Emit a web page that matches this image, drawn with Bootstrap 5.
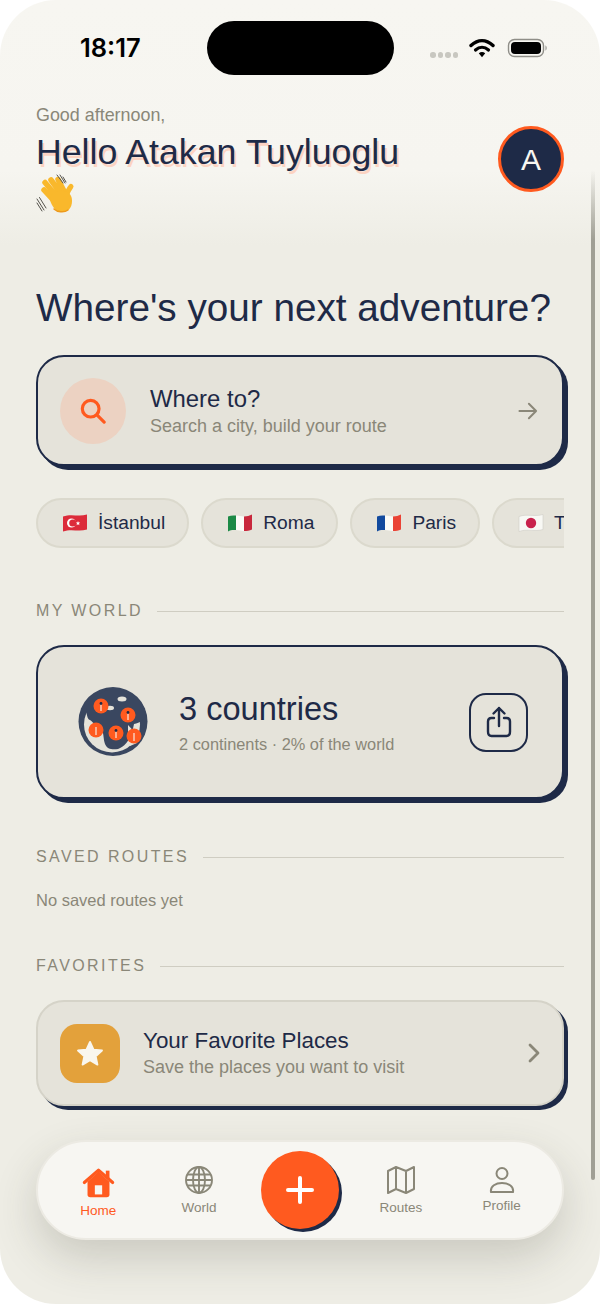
<!DOCTYPE html>
<html lang="en">
<head>
  <meta charset="UTF-8" />
  <meta name="viewport" content="width=device-width, initial-scale=1.0" />
  <title>Home</title>
  <link href="https://cdn.jsdelivr.net/npm/bootstrap@5.3.0/dist/css/bootstrap.min.css" rel="stylesheet" />
  <style>
    body {
      background: #fff;
      margin: 0;
      font-family: "Liberation Sans", Arial, sans-serif;
      color: #1e2a47;
    }

    .phone {
      position: relative;
      width: 600px;
      height: 1304px;
      overflow: hidden;
      border-radius: 56px;
      background: linear-gradient(#f7f6f1 0, #f6f5f0 170px, #eeede5 245px);
    }

    .island {
      position: absolute;
      left: 207px;
      top: 21px;
      width: 187px;
      height: 54px;
      border-radius: 27px;
      background: #000;
    }

    .scroll-thumb {
      position: absolute;
      left: 591px;
      top: 170px;
      width: 4px;
      height: 1010px;
      border-radius: 2px;
      background: linear-gradient(rgba(150, 149, 139, 0) 0, #a09f95 70px);
    }

    .status-row {
      height: 48px;
      margin-top: 24px;
      padding: 0 52px 0 80px;
    }

    .clock {
      font-family: Inter, sans-serif;
      font-weight: 600;
      font-size: 25.5px;
      line-height: 48px;
      color: #000;
    }

    .signal-row {
      gap: 2px;
      margin: 14px 11px 0 0;
    }

    .signal-dot {
      width: 5.5px;
      height: 5.5px;
      border-radius: 50%;
      background: #c8c7c0;
    }

    .page-main {
      padding: 0 36px;
    }

    .greet-label {
      font-size: 17.9px;
      line-height: 22px;
      color: #8a8778;
      margin-top: 32px;
      margin-bottom: 4px;
    }

    .hello-title {
      font-size: 35.7px;
      line-height: 44px;
      font-weight: 400;
      margin: 0;
      color: #1e2a47;
      text-shadow: 2px 3px 0 #fcd3c2;
    }

    .wave-hand {
      display: block;
      margin: -4px 0 0 -6px;
    }

    .avatar-ring {
      width: 66px;
      height: 66px;
      border-radius: 50%;
      background: #1e2a47;
      border: 3px solid #ff5a1f;
      color: #f7f6f1;
      font-size: 30px;
      flex: none;
      margin-top: 54px;
    }

    .adventure-title {
      font-size: 38.7px;
      line-height: 46px;
      font-weight: 400;
      margin: 67px 0 24px;
      white-space: nowrap;
    }

    .hard-card {
      background: #e5e3da;
      border: 2px solid #1e2a47;
      border-radius: 28px;
      box-shadow: 4px 4px 0 #1e2a47;
    }

    .search-card {
      height: 111px;
      padding: 0 24px 0 22px;
    }

    .search-dot {
      width: 66px;
      height: 66px;
      border-radius: 50%;
      background: #ecd2c2;
      flex: none;
    }

    .card-title {
      font-size: 23.9px;
      line-height: 28px;
    }

    .card-sub {
      font-size: 18px;
      line-height: 22px;
      color: #8a8778;
      margin-top: 2px;
    }

    .chip-strip {
      margin-top: 32px;
      overflow: hidden;
      gap: 12px;
    }

    .city-chip {
      height: 50px;
      flex: none;
      border-radius: 25px;
      background: #e5e3da;
      border: 2px solid #dbd9cd;
      font-size: 19.2px;
      gap: 10px;
      padding: 0 22px 0 24px;
    }

    .section-head {
      font-size: 16px;
      line-height: 20px;
      letter-spacing: 2.4px;
      color: #8a8778;
      gap: 14px;
      white-space: nowrap;
    }

    .section-head::after {
      content: "";
      flex: 1;
      height: 1px;
      background: #cfcdc2;
    }

    .world-card {
      height: 154px;
      margin-top: 24px;
      padding: 0 34px 0 40px;
    }

    .world-title {
      font-size: 32.6px;
      line-height: 40px;
    }

    .world-sub {
      font-size: 16.35px;
      line-height: 22px;
      color: #8a8778;
      margin-top: 4px;
    }

    .share-btn {
      width: 59px;
      height: 59px;
      border: 2px solid #1e2a47;
      border-radius: 17px;
      background: transparent;
      padding: 0;
    }

    .empty-note {
      font-size: 16.5px;
      line-height: 20px;
      color: #8a8778;
      margin-top: 23px;
    }

    .fav-card {
      height: 106px;
      margin-top: 24px;
      padding: 0 22px;
      border-color: #d5d3c8;
    }

    .star-tile {
      width: 60px;
      height: 59px;
      border-radius: 17px;
      background: #e3a13b;
      flex: none;
    }

    .fav-title {
      font-size: 22.4px;
      line-height: 26px;
    }

    .fav-sub {
      font-size: 18px;
      line-height: 24px;
      color: #8a8778;
      margin-top: 1px;
    }

    .tab-bar {
      height: 100px;
      margin-top: 34px;
      padding: 0 10px;
      border-radius: 50px;
      background: #f7f6f2;
      border: 2px solid #eceae3;
      box-shadow: 0 18px 44px rgba(60, 58, 45, .2);
    }

    .tab-item {
      width: 101px;
      font-size: 13.5px;
      line-height: 16px;
      color: #8a8778;
      text-decoration: none;
    }

    .tab-item.is-active {
      color: #ff5a1f;
    }

    .fab-add {
      width: 78px;
      height: 78px;
      margin: 0 11.5px;
      flex: none;
      border: 0;
      padding: 0;
      border-radius: 50%;
      background: #ff5a1f;
      box-shadow: 3px 3px 0 #1e2a47;
    }
  </style>
</head>

<body>
  <div class="phone">
    <div class="island"></div>
    <div class="scroll-thumb"></div>

    <div class="status-row d-flex justify-content-between align-items-center">
      <div class="clock">18:17</div>
      <div class="d-flex align-items-center">
        <div class="signal-row d-flex">
          <span class="signal-dot"></span><span class="signal-dot"></span><span class="signal-dot"></span><span class="signal-dot"></span>
        </div>
        <svg width="26" height="20" viewBox="0 0 26 20" class="me-2">
          <path d="M2 7.500C9 1 17 1 24 7.500" fill="none" stroke="#000" stroke-width="3.400" stroke-linecap="round" />
          <path d="M6.500 12C10.500 8.400 15.500 8.400 19.500 12" fill="none" stroke="#000" stroke-width="3.200" stroke-linecap="round" />
          <path d="M9.800 15.200C11.800 13.500 14.200 13.500 16.200 15.200L13 19.200Z" fill="#000" />
        </svg>
        <svg width="41" height="20" viewBox="0 0 40 20" class="ms-1">
          <rect x="1" y="1.500" width="35" height="17" rx="6" fill="none" stroke="#8f8e88" stroke-width="1.400" />
          <rect x="3.500" y="4" width="30" height="12" rx="4" fill="#000" />
          <path d="M38 7.500C39.500 8 39.500 12 38 12.500Z" fill="#8f8e88" />
        </svg>
      </div>
    </div>

    <main class="page-main">
      <header class="d-flex justify-content-between align-items-start">
        <div>
          <p class="greet-label">Good afternoon,</p>
          <h1 class="hello-title">Hello Atakan Tuyluoglu</h1>
          <svg class="wave-hand" width="50" height="48" viewBox="0 0 50 48">
            <g fill="none" stroke="#f9b82c" stroke-width="5.500" stroke-linecap="round">
              <path d="M14 20 25 32M15 12.500 28 28M21 10 32 25M28 9.500 35 23" />
              <path d="M41 16.500C38 20 37 23 36 27" stroke-width="5" />
            </g>
            <path d="M20 30C20 24 26 20 34 21c5 1 8 4 8 10 0 7-4 11-10 11-6 0-10-5-12-12Z" fill="#f9b82c" />
            <path d="M24 39c3 3 10 4 14 1" fill="none" stroke="#ed9a1c" stroke-width="1.500" stroke-linecap="round" />
            <g fill="none" stroke="#55534d" stroke-width="1" stroke-linecap="round">
              <path d="M7 29 14 40M9.500 27.500 16 38M7 33l5 8" />
              <path d="M27 5l6 8M30 5l5 8M33 7l3 5" />
            </g>
          </svg>
        </div>
        <div class="avatar-ring d-flex align-items-center justify-content-center">A</div>
      </header>

      <h2 class="adventure-title">Where's your next adventure?</h2>

      <div class="hard-card search-card d-flex align-items-center">
        <div class="search-dot d-flex align-items-center justify-content-center">
          <svg width="26" height="26" viewBox="0 0 28 28" fill="none" stroke="#ff5a1f" stroke-width="3.400" stroke-linecap="round">
            <circle cx="11.500" cy="11.500" r="9" />
            <path d="M18.500 18.500 26 26" />
          </svg>
        </div>
        <div class="flex-grow-1" style="margin-left:24px">
          <div class="card-title">Where to?</div>
          <div class="card-sub">Search a city, build your route</div>
        </div>
        <svg width="20" height="18" viewBox="0 0 22 20" fill="none" stroke="#8a8778" stroke-width="2.200" stroke-linecap="round" stroke-linejoin="round">
          <path d="M1.500 10H20M12 2l8 8-8 8" />
        </svg>
      </div>

      <div class="chip-strip d-flex">
        <div class="city-chip d-flex align-items-center">
          <svg width="26" height="20" viewBox="0 0 26 20">
            <path d="M1 3.500C9 .5 17 4 25 1.500v15C17 19 9 15.500 1 18.500Z" fill="#dc2b3a" />
            <circle cx="9.500" cy="10" r="4.500" fill="#fff" />
            <circle cx="10.800" cy="10" r="3.600" fill="#dc2b3a" />
            <path d="M16 8l.6 1.500 1.600.1-1.200 1 .4 1.600-1.400-.9-1.400.9.400-1.600-1.200-1 1.600-.1Z" fill="#fff" />
          </svg>
          <span>İstanbul</span>
        </div>
        <div class="city-chip d-flex align-items-center">
          <svg width="26" height="20" viewBox="0 0 26 20">
            <path d="M1 3.500C3.500 2.500 6 2.300 9 2.600v14.500C6 16.800 3.500 17 1 18.500Z" fill="#1c8a46" />
            <path d="M9 2.600c3 .3 5.500 1 8 .9v14.500c-2.500.1-5-.6-8-.9Z" fill="#fbfbf7" />
            <path d="M17 3.500c3 0 5.500-1 8-2v15c-2.500 1-5 1.500-8 1.500Z" fill="#c8283c" />
          </svg>
          <span>Roma</span>
        </div>
        <div class="city-chip d-flex align-items-center">
          <svg width="26" height="20" viewBox="0 0 26 20">
            <path d="M1 3.500C3.500 2.500 6 2.300 9 2.600v14.500C6 16.800 3.500 17 1 18.500Z" fill="#124a9e" />
            <path d="M9 2.600c3 .3 5.500 1 8 .9v14.500c-2.500.1-5-.6-8-.9Z" fill="#fbfbf7" />
            <path d="M17 3.500c3 0 5.500-1 8-2v15c-2.500 1-5 1.500-8 1.500Z" fill="#ea4335" />
          </svg>
          <span>Paris</span>
        </div>
        <div class="city-chip d-flex align-items-center">
          <svg width="26" height="20" viewBox="0 0 26 20">
            <path d="M1 3.500C9 .5 17 4 25 1.500v15C17 19 9 15.500 1 18.500Z" fill="#f8f8f4" stroke="#cfcdc6" stroke-width=".6" />
            <circle cx="13" cy="10" r="5.200" fill="#c8224c" />
          </svg>
          <span>Tokyo</span>
        </div>
      </div>

      <div class="section-head d-flex align-items-center" style="margin-top:53px">MY WORLD</div>

      <div class="hard-card world-card d-flex align-items-center">
        <svg width="70" height="70" viewBox="78 688 70 70" class="flex-shrink-0">
          <circle cx="113" cy="722.500" r="34.500" fill="#3a4760" />
          <circle cx="112" cy="725.500" r="28" fill="#e5e3da" />
          <path d="M86 712C90 698 104 690 116 690c14 0 26 10 30 24-1 6-6 10-12 11l-2 9c-3 8-8 14-14 16-6 1-11 0-13-5-2-6-1-12-4-16-6-2-7-5-11-8-2 0-3-4-4-9Z" fill="#3a4760" />
          <path d="M128 726c4 4 8 9 10 12l-1 6-7 3-2-10Z" fill="#e5e3da" />
          <ellipse cx="122" cy="700" rx="4.500" ry="2.500" fill="#e5e3da" />
          <ellipse cx="110" cy="709" rx="4" ry="2.200" fill="#e5e3da" />
          <g fill="#ff5a1f">
            <circle cx="101" cy="707" r="7.500" />
            <circle cx="128" cy="716" r="7.500" />
            <circle cx="96" cy="731" r="7.500" />
            <circle cx="116" cy="734" r="7.500" />
            <circle cx="134" cy="737" r="7.500" />
          </g>
          <g fill="none" stroke="#f7f6f1" stroke-width="1.100">
            <path d="M101 704v8M128 713v8M96 728v8M116 731v8M134 734v8" />
          </g>
          <g fill="#1e2a47">
            <circle cx="101" cy="704.500" r="1.400" />
            <circle cx="128" cy="713.500" r="1.400" />
            <circle cx="116" cy="731.500" r="1.400" />
          </g>
        </svg>
        <div class="flex-grow-1" style="margin-left:31px">
          <div class="world-title">3 countries</div>
          <div class="world-sub">2 continents · 2% of the world</div>
        </div>
        <button class="share-btn d-flex align-items-center justify-content-center" type="button" aria-label="Share">
          <svg width="26" height="32" viewBox="0 0 26 32" fill="none" stroke="#1e2a47" stroke-width="2.400" stroke-linecap="round" stroke-linejoin="round">
            <path d="M8 12H5.500C3 12 2 13.500 2 15.500v10C2 28.500 3 30 5.500 30h15c2.500 0 3.500-1.500 3.500-4.500v-10c0-2-1-3.500-3.500-3.500H18" />
            <path d="M13 20V2M7.500 7.500 13 2l5.500 5.500" />
          </svg>
        </button>
      </div>

      <div class="section-head d-flex align-items-center" style="margin-top:48px">SAVED ROUTES</div>
      <p class="empty-note">No saved routes yet</p>
      <div class="section-head d-flex align-items-center" style="margin-top:46px">FAVORITES</div>

      <div class="hard-card fav-card d-flex align-items-center">
        <div class="star-tile d-flex align-items-center justify-content-center">
          <svg width="28" height="27" viewBox="0 0 30 29">
            <path d="M15 2l3.800 8.300 9.100 1-6.800 6.100 1.900 9L15 21.800 7 26.400l1.900-9-6.800-6.100 9.100-1Z" fill="#f9f6ee" stroke="#f9f6ee" stroke-width="2" stroke-linejoin="round" />
          </svg>
        </div>
        <div class="flex-grow-1" style="margin-left:23px">
          <div class="fav-title">Your Favorite Places</div>
          <div class="fav-sub">Save the places you want to visit</div>
        </div>
        <svg width="12" height="20" viewBox="0 0 12 20" fill="none" stroke="#8a8778" stroke-width="2.800" stroke-linecap="round" stroke-linejoin="round">
          <path d="M2 2l8 8-8 8" />
        </svg>
      </div>

      <nav class="tab-bar d-flex align-items-center">
        <a class="tab-item is-active d-flex flex-column align-items-center" href="#" style="margin-top:5px">
          <svg width="33" height="32" viewBox="0 0 36 35">
            <path d="M6 16 18 5l12 11v14c0 2-1 3-3 3H9c-2 0-3-1-3-3Z" fill="#ff5a1f" />
            <path d="M2.500 17 18 3.500 33.500 17" fill="none" stroke="#ff5a1f" stroke-width="3.400" stroke-linecap="round" stroke-linejoin="round" />
            <rect x="26" y="4" width="4" height="8" fill="#ff5a1f" />
            <rect x="14" y="20" width="8" height="10" fill="#f7f6f2" />
          </svg>
          <span style="margin-top:4px">Home</span>
        </a>
        <a class="tab-item d-flex flex-column align-items-center" href="#">
          <svg width="30" height="30" viewBox="0 0 30 30" fill="none" stroke="#8a8778" stroke-width="1.900">
            <circle cx="15" cy="15" r="13" />
            <ellipse cx="15" cy="15" rx="6" ry="13" />
            <path d="M15 2v26M3 9.500h24M2 15h26M3 20.500h24" />
          </svg>
          <span style="margin-top:5px">World</span>
        </a>
        <button class="fab-add d-flex align-items-center justify-content-center" type="button" aria-label="Add">
          <svg width="28" height="28" viewBox="0 0 28 28" stroke="#fff" stroke-width="4" stroke-linecap="round">
            <path d="M14 2v24M2 14h24" />
          </svg>
        </button>
        <a class="tab-item d-flex flex-column align-items-center" href="#">
          <svg width="30" height="30" viewBox="0 0 30 30" fill="none" stroke="#8a8778" stroke-width="2" stroke-linejoin="round">
            <path d="M2 6 10 2l10 4 8-4v22l-8 4-10-4-8 4ZM10 2v22M20 6v22" />
          </svg>
          <span style="margin-top:5px">Routes</span>
        </a>
        <a class="tab-item d-flex flex-column align-items-center" href="#">
          <svg width="26" height="28" viewBox="0 0 26 28" fill="none" stroke="#8a8778" stroke-width="2">
            <circle cx="13" cy="7.500" r="5.500" />
            <path d="M2 26c-1-6 5-9 11-9s12 3 11 9Z" stroke-linejoin="round" />
          </svg>
          <span style="margin-top:4px">Profile</span>
        </a>
      </nav>
    </main>
  </div>
  <script src="https://cdn.jsdelivr.net/npm/bootstrap@5.3.0/dist/js/bootstrap.bundle.min.js"></script>
</body>
</html>
